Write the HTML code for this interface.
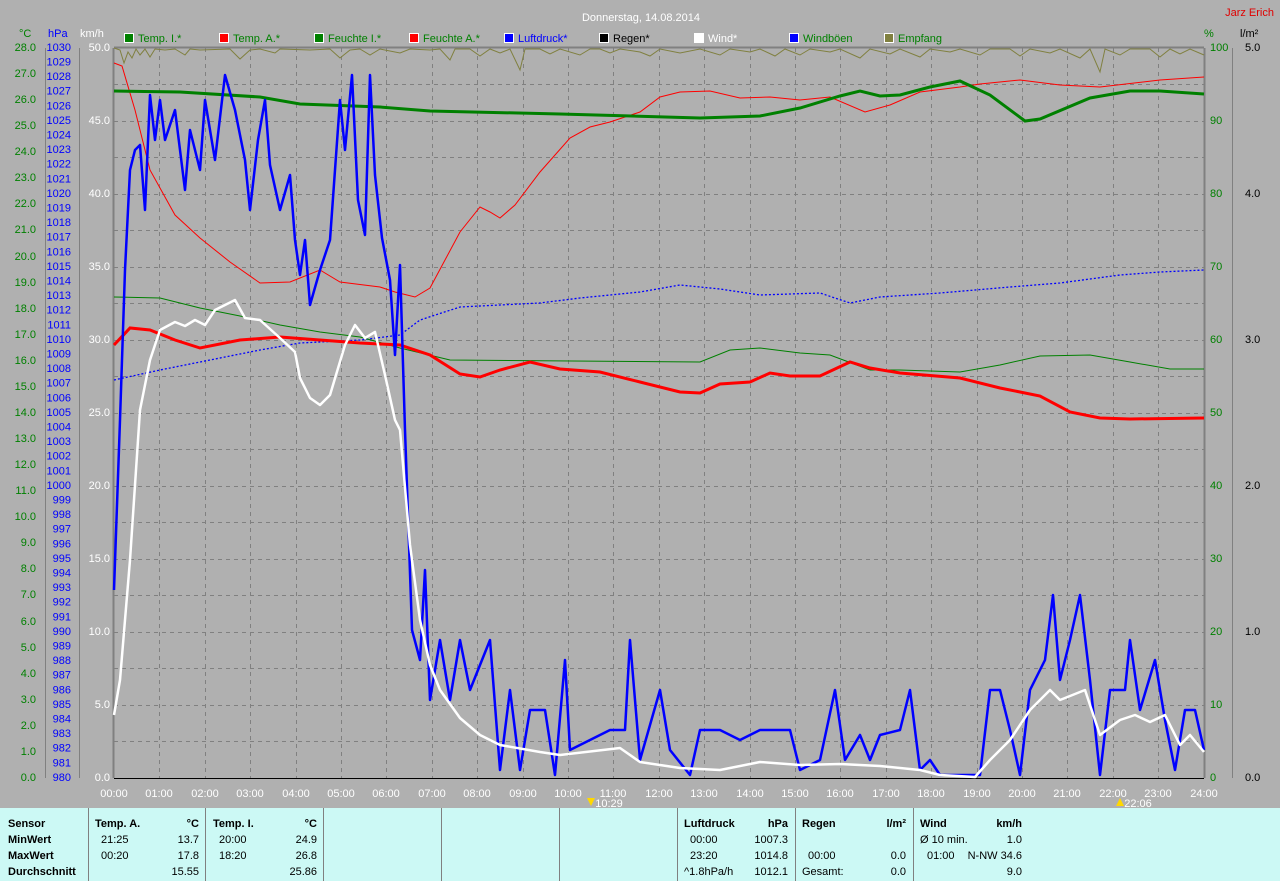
<!DOCTYPE html>
<html><head><meta charset="utf-8"><style>
html,body{margin:0;padding:0;width:1280px;height:881px;overflow:hidden;background:#b0b0b0;font-family:"Liberation Sans",sans-serif}
svg{display:block}
text{font-family:"Liberation Sans",sans-serif;font-size:11px}
</style></head><body>
<svg width="1280" height="881" viewBox="0 0 1280 881">
<rect width="1280" height="881" fill="#b0b0b0"/>
<text x="641" y="21" fill="#fff" font-size="16" text-anchor="middle">Donnerstag, 14.08.2014</text>
<text x="1274" y="16" fill="#e00000" text-anchor="end">Jarz Erich</text>
<text x="19" y="37" fill="#008000">°C</text>
<text x="48" y="37" fill="#0000ff">hPa</text>
<text x="80" y="37" fill="#fff">km/h</text>
<text x="1204" y="37" fill="#008000">%</text>
<text x="1240" y="37" fill="#000">l/m²</text>
<g stroke="#fff" stroke-width="1">
<rect x="124.5" y="33.5" width="9" height="9" fill="#008000"/>
<rect x="219.5" y="33.5" width="9" height="9" fill="#ff0000"/>
<rect x="314.5" y="33.5" width="9" height="9" fill="#008000"/>
<rect x="409.5" y="33.5" width="9" height="9" fill="#ff0000"/>
<rect x="504.5" y="33.5" width="9" height="9" fill="#0000ff"/>
<rect x="599.5" y="33.5" width="9" height="9" fill="#000"/>
<rect x="694.5" y="33.5" width="9" height="9" fill="#fff"/>
<rect x="789.5" y="33.5" width="9" height="9" fill="#0000ff"/>
<rect x="884.5" y="33.5" width="9" height="9" fill="#808040"/>
</g>
<text x="138" y="42" fill="#008000">Temp. I.*</text>
<text x="233" y="42" fill="#008000">Temp. A.*</text>
<text x="328" y="42" fill="#008000">Feuchte I.*</text>
<text x="423" y="42" fill="#008000">Feuchte A.*</text>
<text x="518" y="42" fill="#0000ff">Luftdruck*</text>
<text x="613" y="42" fill="#000">Regen*</text>
<text x="708" y="42" fill="#fff">Wind*</text>
<text x="803" y="42" fill="#008000">Windböen</text>
<text x="898" y="42" fill="#008000">Empfang</text>
<g stroke="#808080" stroke-width="1" stroke-dasharray="4,4">
<path d="M159.5 48V778M205.5 48V778M250.5 48V778M296.5 48V778M341.5 48V778M386.5 48V778M432.5 48V778M477.5 48V778M523.5 48V778M568.5 48V778M613.5 48V778M659.5 48V778M704.5 48V778M750.5 48V778M795.5 48V778M840.5 48V778M886.5 48V778M931.5 48V778M977.5 48V778M1022.5 48V778M1067.5 48V778M1113.5 48V778M1158.5 48V778"/>
<path d="M114 84.5H1204M114 121.5H1204M114 157.5H1204M114 194.5H1204M114 230.5H1204M114 267.5H1204M114 303.5H1204M114 340.5H1204M114 376.5H1204M114 413.5H1204M114 449.5H1204M114 486.5H1204M114 522.5H1204M114 559.5H1204M114 595.5H1204M114 632.5H1204M114 668.5H1204M114 705.5H1204M114 741.5H1204"/>
</g>
<path d="M114 47.5H1204M113.5 48V778M1204.5 48V778" stroke="#808080" stroke-width="2" fill="none"/>
<path d="M114 778.5H1204" stroke="#000" stroke-width="1"/>
<path d="M45.5 48V778M79.5 48V778" stroke="#808080" fill="none"/>
<path d="M1232.5 48V778" stroke="#808080" fill="none"/>
<g fill="#008000" text-anchor="end" dominant-baseline="middle">
<text x="36" y="48">28.0</text><text x="36" y="74">27.0</text><text x="36" y="100">26.0</text><text x="36" y="126">25.0</text><text x="36" y="152">24.0</text><text x="36" y="178">23.0</text><text x="36" y="204">22.0</text><text x="36" y="230">21.0</text><text x="36" y="257">20.0</text><text x="36" y="283">19.0</text><text x="36" y="309">18.0</text><text x="36" y="335">17.0</text><text x="36" y="361">16.0</text><text x="36" y="387">15.0</text><text x="36" y="413">14.0</text><text x="36" y="439">13.0</text><text x="36" y="465">12.0</text><text x="36" y="491">11.0</text><text x="36" y="517">10.0</text><text x="36" y="543">9.0</text><text x="36" y="569">8.0</text><text x="36" y="595">7.0</text><text x="36" y="622">6.0</text><text x="36" y="648">5.0</text><text x="36" y="674">4.0</text><text x="36" y="700">3.0</text><text x="36" y="726">2.0</text><text x="36" y="752">1.0</text><text x="36" y="778">0.0</text>
</g>
<g fill="#0000ff" text-anchor="end" dominant-baseline="middle" font-size="10.5">
<text x="71" y="48">1030</text><text x="71" y="62.6">1029</text><text x="71" y="77.2">1028</text><text x="71" y="91.8">1027</text><text x="71" y="106.4">1026</text><text x="71" y="121">1025</text><text x="71" y="135.6">1024</text><text x="71" y="150.2">1023</text><text x="71" y="164.8">1022</text><text x="71" y="179.4">1021</text><text x="71" y="194">1020</text><text x="71" y="208.6">1019</text><text x="71" y="223.2">1018</text><text x="71" y="237.8">1017</text><text x="71" y="252.4">1016</text><text x="71" y="267">1015</text><text x="71" y="281.6">1014</text><text x="71" y="296.2">1013</text><text x="71" y="310.8">1012</text><text x="71" y="325.4">1011</text><text x="71" y="340">1010</text><text x="71" y="354.6">1009</text><text x="71" y="369.2">1008</text><text x="71" y="383.8">1007</text><text x="71" y="398.4">1006</text><text x="71" y="413">1005</text><text x="71" y="427.6">1004</text><text x="71" y="442.2">1003</text><text x="71" y="456.8">1002</text><text x="71" y="471.4">1001</text><text x="71" y="486">1000</text><text x="71" y="500.6">999</text><text x="71" y="515.2">998</text><text x="71" y="529.8">997</text><text x="71" y="544.4">996</text><text x="71" y="559">995</text><text x="71" y="573.6">994</text><text x="71" y="588.2">993</text><text x="71" y="602.8">992</text><text x="71" y="617.4">991</text><text x="71" y="632">990</text><text x="71" y="646.6">989</text><text x="71" y="661.2">988</text><text x="71" y="675.8">987</text><text x="71" y="690.4">986</text><text x="71" y="705">985</text><text x="71" y="719.6">984</text><text x="71" y="734.2">983</text><text x="71" y="748.8">982</text><text x="71" y="763.4">981</text><text x="71" y="778">980</text>
</g>
<g fill="#fff" text-anchor="end" dominant-baseline="middle">
<text x="110" y="48">50.0</text><text x="110" y="121">45.0</text><text x="110" y="194">40.0</text><text x="110" y="267">35.0</text><text x="110" y="340">30.0</text><text x="110" y="413">25.0</text><text x="110" y="486">20.0</text><text x="110" y="559">15.0</text><text x="110" y="632">10.0</text><text x="110" y="705">5.0</text><text x="110" y="778">0.0</text>
</g>
<g fill="#008000" dominant-baseline="middle">
<text x="1210" y="48">100</text><text x="1210" y="121">90</text><text x="1210" y="194">80</text><text x="1210" y="267">70</text><text x="1210" y="340">60</text><text x="1210" y="413">50</text><text x="1210" y="486">40</text><text x="1210" y="559">30</text><text x="1210" y="632">20</text><text x="1210" y="705">10</text><text x="1210" y="778">0</text>
</g>
<g fill="#000" dominant-baseline="middle">
<text x="1245" y="48">5.0</text><text x="1245" y="194">4.0</text><text x="1245" y="340">3.0</text><text x="1245" y="486">2.0</text><text x="1245" y="632">1.0</text><text x="1245" y="778">0.0</text>
</g>
<g fill="#fff" text-anchor="middle">
<text x="114" y="797">00:00</text><text x="159" y="797">01:00</text><text x="205" y="797">02:00</text><text x="250" y="797">03:00</text><text x="296" y="797">04:00</text><text x="341" y="797">05:00</text><text x="386" y="797">06:00</text><text x="432" y="797">07:00</text><text x="477" y="797">08:00</text><text x="523" y="797">09:00</text><text x="568" y="797">10:00</text><text x="613" y="797">11:00</text><text x="659" y="797">12:00</text><text x="704" y="797">13:00</text><text x="750" y="797">14:00</text><text x="795" y="797">15:00</text><text x="840" y="797">16:00</text><text x="886" y="797">17:00</text><text x="931" y="797">18:00</text><text x="977" y="797">19:00</text><text x="1022" y="797">20:00</text><text x="1067" y="797">21:00</text><text x="1113" y="797">22:00</text><text x="1158" y="797">23:00</text><text x="1204" y="797">24:00</text>
<text x="609" y="807">10:29</text><text x="1138" y="807">22:06</text>
</g>
<path d="M587 798l4 8 4-8z" fill="#ffd800"/>
<path d="M1116 806l4-8 4 8z" fill="#ffd800"/>
<polyline fill="none" stroke="#808040" stroke-width="1" points="114,48 120,50 124,63 128,52 132,58 136,49 140,55 145,49 150,57 155,49 165,50 175,49 185,55 190,49 200,50 230,49 240,59 250,50 260,49 275,53 280,49 310,50 330,49 340,58 350,50 360,49 370,55 380,49 400,53 410,49 430,50 440,49 450,60 455,49 470,49 480,56 490,49 500,53 510,49 520,70 525,49 540,49 550,54 560,49 580,55 590,49 600,49 610,53 620,49 640,52 650,56 660,49 680,53 700,49 720,55 730,49 750,52 760,49 775,56 785,49 800,55 810,49 830,52 840,49 860,58 870,49 890,54 900,49 920,57 930,49 950,52 960,49 980,55 990,49 1010,49 1020,56 1030,49 1050,53 1060,49 1080,58 1090,49 1100,72 1105,49 1120,55 1130,49 1150,49 1160,57 1170,49 1180,54 1190,49 1204,55"/>
<polyline fill="none" stroke="#0000ff" stroke-width="1.3" stroke-dasharray="2,2" points="114,380 160,370 200,362 260,350 300,343 360,340 400,335 420,320 460,307 500,305 540,303 580,298 640,292 680,285 720,289 760,295 820,293 850,303 880,297 940,293 1010,287 1060,283 1120,275 1160,272 1204,270"/>
<polyline fill="none" stroke="#008000" stroke-width="1" points="114,297 160,298 200,308 240,316 280,325 320,332 360,337 400,348 450,360 700,362 730,350 760,348 800,353 830,355 870,370 900,370 960,372 1000,365 1040,356 1090,355 1130,362 1170,369 1204,369"/>
<polyline fill="none" stroke="#ff0000" stroke-width="1" points="114,63 122,66 135,110 150,170 175,215 200,238 230,262 260,283 290,282 320,270 340,282 380,287 395,292 415,297 430,288 445,260 460,232 480,207 490,212 500,218 515,205 540,172 570,138 590,127 610,122 640,112 660,97 680,92 710,91 740,98 770,97 800,100 830,97 865,112 890,105 920,92 960,87 980,84 1020,80 1060,85 1100,87 1160,80 1204,77"/>
<polyline fill="none" stroke="#ff0000" stroke-width="3" points="114,345 130,328 150,330 175,340 200,348 240,340 280,337 320,340 360,343 400,345 430,355 460,374 480,377 500,370 530,362 560,369 600,372 640,382 680,392 700,393 720,384 750,382 770,373 790,376 820,376 850,362 870,368 900,373 960,378 1000,388 1040,396 1070,412 1100,418 1130,419 1204,418"/>
<polyline fill="none" stroke="#008000" stroke-width="3" points="114,91 180,92 260,97 300,104 380,107 430,111 560,114 700,118 760,116 800,108 840,96 860,91 880,96 900,95 930,87 960,81 990,95 1025,121 1040,119 1090,98 1130,91 1160,91 1204,94"/>
<polyline fill="none" stroke="#0000ff" stroke-width="2.5" stroke-linejoin="round" points="114,590 120,420 125,270 130,170 135,150 140,145 145,210 150,95 155,140 160,100 165,140 175,110 185,190 190,130 200,170 205,100 215,160 225,75 235,110 245,160 250,210 258,140 265,100 270,165 280,210 290,175 295,240 300,275 305,240 310,305 320,270 330,240 340,100 345,150 352,75 358,200 365,235 370,75 375,175 382,238 390,280 395,355 400,265 405,430 412,630 420,660 425,570 430,700 440,640 450,700 460,640 470,690 490,640 500,770 510,690 520,770 530,710 545,710 555,775 565,660 570,750 590,740 610,730 625,730 630,640 640,760 660,690 670,750 690,775 700,730 720,730 740,740 760,730 790,730 800,770 820,760 835,690 845,760 860,735 870,760 880,735 900,730 910,690 920,770 930,760 940,775 980,775 990,690 1000,690 1010,730 1020,775 1030,690 1045,660 1053,595 1060,680 1070,640 1080,595 1090,680 1100,775 1110,690 1125,690 1130,640 1140,710 1155,660 1165,720 1175,770 1185,710 1195,710 1204,750"/>
<polyline fill="none" stroke="#fff" stroke-width="2.5" stroke-linejoin="round" points="114,715 120,680 130,560 140,410 150,360 160,330 175,322 185,326 195,320 205,325 215,310 225,305 235,300 245,318 260,320 280,338 295,352 300,378 310,398 320,405 330,395 345,345 355,325 365,338 375,332 385,375 395,420 400,430 410,545 420,620 430,665 440,690 460,718 480,735 500,745 540,752 560,755 620,748 640,762 680,768 720,770 760,762 800,765 840,764 880,766 920,770 940,775 975,777 990,760 1010,740 1030,710 1050,690 1060,700 1085,690 1100,735 1120,720 1135,715 1150,722 1165,715 1180,745 1190,735 1204,752"/>
<rect x="0" y="808" width="1280" height="73" fill="#ccf9f5"/>
<path d="M88.5 808V881M205.5 808V881M323.5 808V881M441.5 808V881M559.5 808V881M677.5 808V881M795.5 808V881M913.5 808V881" stroke="#808080"/>
<g fill="#000">
<g font-weight="bold">
<text x="8" y="827">Sensor</text><text x="8" y="859">MaxWert</text><text x="8" y="843">MinWert</text><text x="8" y="875">Durchschnitt</text>
<text x="95" y="827">Temp. A.</text><text x="199" y="827" text-anchor="end">°C</text>
<text x="213" y="827">Temp. I.</text><text x="317" y="827" text-anchor="end">°C</text>
<text x="684" y="827">Luftdruck</text><text x="788" y="827" text-anchor="end">hPa</text>
<text x="802" y="827">Regen</text><text x="906" y="827" text-anchor="end">l/m²</text>
<text x="920" y="827">Wind</text><text x="1022" y="827" text-anchor="end">km/h</text>
</g>
<text x="101" y="843">21:25</text><text x="199" y="843" text-anchor="end">13.7</text>
<text x="101" y="859">00:20</text><text x="199" y="859" text-anchor="end">17.8</text>
<text x="199" y="875" text-anchor="end">15.55</text>
<text x="219" y="843">20:00</text><text x="317" y="843" text-anchor="end">24.9</text>
<text x="219" y="859">18:20</text><text x="317" y="859" text-anchor="end">26.8</text>
<text x="317" y="875" text-anchor="end">25.86</text>
<text x="690" y="843">00:00</text><text x="788" y="843" text-anchor="end">1007.3</text>
<text x="690" y="859">23:20</text><text x="788" y="859" text-anchor="end">1014.8</text>
<text x="684" y="875">^1.8hPa/h</text><text x="788" y="875" text-anchor="end">1012.1</text>
<text x="808" y="859">00:00</text><text x="906" y="859" text-anchor="end">0.0</text>
<text x="802" y="875">Gesamt:</text><text x="906" y="875" text-anchor="end">0.0</text>
<text x="920" y="843">Ø 10 min.</text><text x="1022" y="843" text-anchor="end">1.0</text>
<text x="927" y="859">01:00</text><text x="1022" y="859" text-anchor="end">N-NW 34.6</text>
<text x="1022" y="875" text-anchor="end">9.0</text>
</g>
</svg>
</body></html>
